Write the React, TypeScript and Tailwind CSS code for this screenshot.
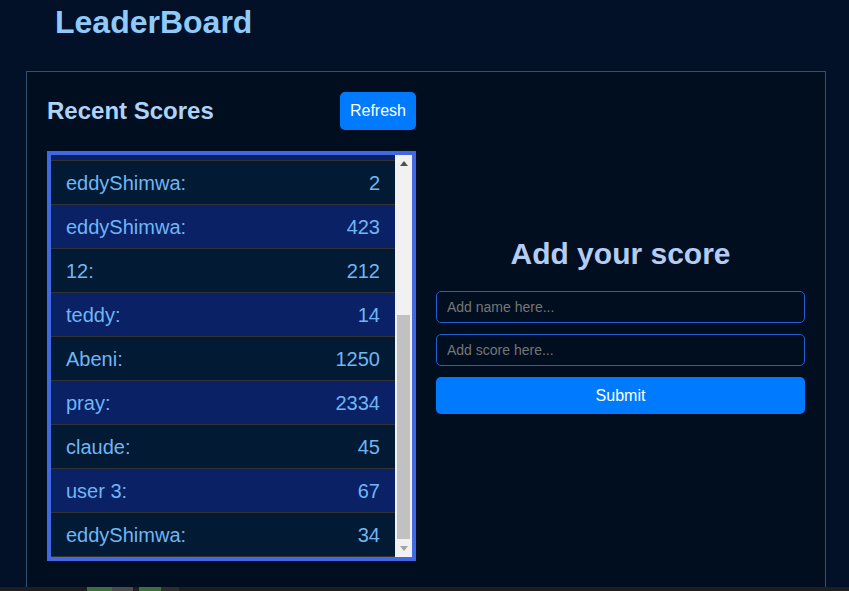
import { useEffect, useRef } from 'react';

const scores = [
  { name: 'alice', score: 88 },
  { name: 'bob', score: 150 },
  { name: 'user 1', score: 30 },
  { name: 'user 2', score: 75 },
  { name: 'john', score: 500 },
  { name: 'mary', score: 99 },
  { name: 'eddyShimwa', score: 2 },
  { name: 'eddyShimwa', score: 423 },
  { name: '12', score: 212 },
  { name: 'teddy', score: 14 },
  { name: 'Abeni', score: 1250 },
  { name: 'pray', score: 2334 },
  { name: 'claude', score: 45 },
  { name: 'user 3', score: 67 },
  { name: 'eddyShimwa', score: 34 },
];

function Scrollbar() {
  return (
    <div className="w-[17px] shrink-0 bg-[#f1f1f1] flex flex-col">
      <div className="h-[17px] flex items-center justify-center">
        <svg width="8" height="5" viewBox="0 0 8 5">
          <path d="M0 5 L4 0 L8 5 Z" fill="#505050" />
        </svg>
      </div>
      <div className="flex-1 pt-[143px] pb-[1px] pl-[2px] pr-[2px] flex flex-col">
        <div className="flex-1 bg-[#c1c1c1]" />
      </div>
      <div className="h-[17px] flex items-center justify-center">
        <svg width="8" height="5" viewBox="0 0 8 5">
          <path d="M0 0 L8 0 L4 5 Z" fill="#a3a3a3" />
        </svg>
      </div>
    </div>
  );
}

export default function App() {
  const listRef = useRef<HTMLUListElement>(null);

  useEffect(() => {
    // list is shown scrolled to the latest entries
    if (listRef.current) listRef.current.scrollTop = listRef.current.scrollHeight;
  }, []);

  return (
    <div
      className="h-[591px] overflow-hidden flex flex-col bg-[#021127]"
      style={{ fontFamily: '"Liberation Sans", Arial, sans-serif' }}
    >
      <div className="flex-1 min-h-0 pl-[26px] pr-[23px]">
        <h1 className="pl-[29px] pt-[6px] text-[32px] leading-[32px] font-bold text-[#90caf9]">LeaderBoard</h1>

        <main className="mt-[33px] border border-[#34506f] bg-[#010e20] pt-[20px] px-[20px] pb-[40px] flex items-center gap-[20px]">
          <section className="flex-1 min-w-0">
            <div className="flex items-center justify-between h-[38px]">
              <h2 className="text-[24px] font-bold text-[#afd3f7]">Recent Scores</h2>
              <button className="h-[38px] px-[10px] rounded-[5px] bg-[#007bff] text-white text-[16px]">Refresh</button>
            </div>
            <div className="mt-[21px] h-[410px] border-4 border-[#4169e1] flex">
              <ul ref={listRef} className="flex-1 min-w-0 overflow-hidden">
                {scores.map((s, i) => (
                  <li
                    key={i}
                    className={`h-[44px] flex items-center justify-between px-[15px] border-b border-[#333] text-[20px] text-[#6fb6f4] ${
                      i % 2 === 1 ? 'bg-[#0a2166]' : 'bg-[#021a33]'
                    }`}
                  >
                    <span>{s.name}:</span>
                    <span>{s.score}</span>
                  </li>
                ))}
              </ul>
              <Scrollbar />
            </div>
          </section>

          <section className="flex-1 min-w-0 -mt-[8px]">
            <h2 className="text-center text-[30px] font-bold text-[#b4cbf3]">Add your score</h2>
            <form className="mt-[15px] flex flex-col gap-[11px]" onSubmit={(e) => e.preventDefault()}>
              <input
                placeholder="Add name here..."
                className="h-[32px] px-[10px] rounded-[5px] border border-[#1f5fd2] bg-transparent text-[14px] text-white placeholder-[#767676] outline-none"
              />
              <input
                placeholder="Add score here..."
                className="h-[32px] px-[10px] rounded-[5px] border border-[#1f5fd2] bg-transparent text-[14px] text-white placeholder-[#767676] outline-none"
              />
              <button type="submit" className="h-[37px] rounded-[5px] bg-[#007bff] text-white text-[16px]">
                Submit
              </button>
            </form>
          </section>
        </main>
      </div>

      <div className="h-[4px] shrink-0 bg-[#1e1e1e] flex">
        <div className="ml-[87px] w-[25px] bg-[#3f6f3f]" />
        <div className="w-[21px] bg-[#4a4a4a]" />
        <div className="ml-[6px] w-[22px] bg-[#3f6f3f]" />
        <div className="w-[18px] bg-[#2e2e2e]" />
      </div>
    </div>
  );
}
